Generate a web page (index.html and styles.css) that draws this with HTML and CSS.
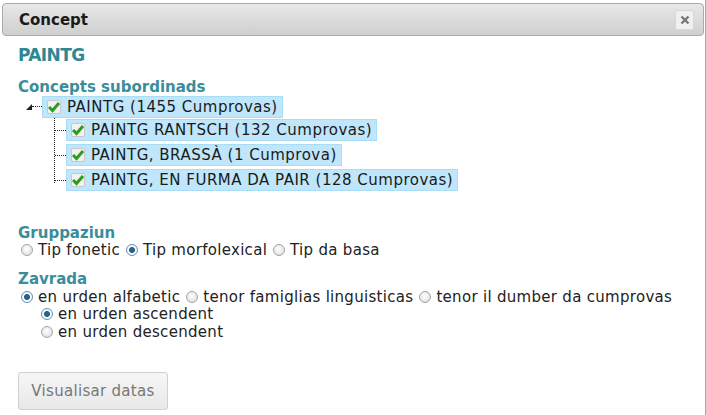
FILE: index.html
```html
<!DOCTYPE html>
<html lang="rm">
<head>
    <meta charset="UTF-8">
    <title>Concept</title>
    <link rel="stylesheet" href="styles.css">
</head>
<body>
    <div class="dialog">
        <div class="titlebar">
            <span class="title">Concept</span>
            <button class="close" title="Serrar">
                <svg width="10" height="10" viewBox="0 0 10 10"><path d="M1.5 1.5 L8.5 8.5 M8.5 1.5 L1.5 8.5" stroke="#777" stroke-width="2.4"/></svg>
            </button>
        </div>
        <div class="content">
            <h2 class="concept-name">PAINTG</h2>

            <h3 class="section-title">Concepts subordinads</h3>
            <div class="tree">
                <div class="tree-root">
                    <span class="toggle">
                        <svg width="8" height="8" viewBox="0 0 8 8"><path d="M7 1 L7 7 L1 7 Z" fill="#222"/></svg>
                    </span>
                    <span class="branch-h"></span>
                    <span class="node"><span class="check"></span>PAINTG (1455 Cumprovas)</span>
                </div>
                <div class="tree-children">
                    <div class="tree-item"><span class="branch-h"></span><span class="node"><span class="check"></span>PAINTG RANTSCH (132 Cumprovas)</span></div>
                    <div class="tree-item"><span class="branch-h"></span><span class="node"><span class="check"></span>PAINTG, BRASSÀ (1 Cumprova)</span></div>
                    <div class="tree-item last"><span class="branch-h"></span><span class="node"><span class="check"></span>PAINTG, EN FURMA DA PAIR (128 Cumprovas)</span></div>
                </div>
            </div>

            <h3 class="section-title spaced">Gruppaziun</h3>
            <div class="options">
                <label class="option"><span class="radio"></span>Tip fonetic</label>
                <label class="option"><span class="radio on"></span>Tip morfolexical</label>
                <label class="option"><span class="radio"></span>Tip da basa</label>
            </div>

            <h3 class="section-title">Zavrada</h3>
            <div class="options">
                <label class="option"><span class="radio on"></span>en urden alfabetic</label>
                <label class="option"><span class="radio"></span>tenor famiglias linguisticas</label>
                <label class="option"><span class="radio"></span>tenor il dumber da cumprovas</label>
            </div>
            <div class="suboptions">
                <label class="option"><span class="radio on"></span>en urden ascendent</label>
                <label class="option"><span class="radio"></span>en urden descendent</label>
            </div>

            <button class="show-btn">Visualisar datas</button>
        </div>
    </div>
</body>
</html>
```

FILE: styles.css
```css
* {
    margin: 0;
    padding: 0;
    box-sizing: border-box;
}

body, html {
    height: 100%;
    background: #fff;
    font-family: "DejaVu Sans", Verdana, sans-serif;
    overflow: hidden;
}

.dialog {
    width: 706px;
    height: 415px;
    border-right: 1px solid #a8a8a8;
    padding: 3px 1px 0 2px;
    color: #222;
}

/* Title bar */
.titlebar {
    display: flex;
    align-items: center;
    justify-content: space-between;
    height: 33px;
    padding: 0 9px 0 16px;
    border: 1px solid #aaa;
    border-radius: 4px;
    background: linear-gradient(#e8e8e8, #cfcfcf);
}

.title {
    font-size: 15px;
    font-weight: bold;
    color: #1a1a1a;
}

.close {
    display: flex;
    align-items: center;
    justify-content: center;
    width: 19px;
    height: 20px;
    border: 1px solid #d8d8d8;
    border-radius: 2px;
    background: #f0f0f0;
}

.content {
    padding: 6px 0 0 16px;
}

.concept-name {
    font-size: 17px;
    font-weight: bold;
    color: #2e8795;
    line-height: 26px;
    letter-spacing: -0.6px;
    margin-bottom: 11px;
}

.section-title {
    font-size: 15px;
    font-weight: bold;
    color: #3a8d9a;
    line-height: 16px;
}

.section-title.spaced {
    margin-top: 42px;
}

/* Tree */
.tree {
    font-size: 15px;
    letter-spacing: 0.5px;
    color: #1a1a1a;
}

.tree-root {
    display: flex;
    align-items: center;
    height: 23px;
    padding-left: 7px;
}

.toggle {
    display: flex;
    align-items: flex-end;
    width: 8px;
    height: 12px;
    margin-bottom: 4px;
}

.branch-h {
    width: 11px;
    border-top: 1px dotted #222;
}

.tree-root .branch-h {
    width: 10px;
    margin-left: -1px;
}

.node {
    display: flex;
    align-items: center;
    height: 22px;
    padding: 0 4px 0 4px;
    background: #bfe6fb;
    border: 1px solid #a9dcf7;
    white-space: nowrap;
}

.check {
    width: 14px;
    height: 14px;
    margin-right: 6px;
    border: 1px solid #c8c8c8;
    border-radius: 2px;
    background: #f2f2f2 url("data:image/svg+xml,%3Csvg xmlns='http://www.w3.org/2000/svg' width='14' height='14' viewBox='0 0 14 14'%3E%3Cpath d='M2 7 L5.5 10.5 L12 3' fill='none' stroke='%232a9d1e' stroke-width='3'/%3E%3C/svg%3E") no-repeat center;
}

.tree-children {
    margin-left: 36px;
    border-left: 1px dotted #222;
    height: 65px;
    display: flex;
    flex-direction: column;
    gap: 2px;
}

.tree-item {
    display: flex;
    align-items: center;
    height: 22px;
    margin-top: 1px;
}

/* Radios */
.options {
    display: flex;
    gap: 6px;
    font-size: 15px;
    letter-spacing: 0.3px;
    line-height: 18px;
    margin: 1px 0 14px 3px;
}

.section-title.spaced + .options {
    margin-top: 0;
    margin-bottom: 12px;
}

.option {
    display: flex;
    align-items: center;
    white-space: nowrap;
}

.radio {
    width: 12px;
    height: 12px;
    margin-right: 5px;
    border-radius: 50%;
    border: 1px solid #a4a4a4;
    background: radial-gradient(circle at 45% 40%, #fff, #d8d8d8);
}

.radio.on {
    background: radial-gradient(circle, #1d6ea0 0, #1a5f8a 2.5px, #fff 3.5px, #e4e4e4 100%);
    border-color: #6b8eb0;
}

.options + .suboptions {
    margin-top: -15px;
}

.suboptions {
    display: flex;
    flex-direction: column;
    font-size: 15px;
    letter-spacing: 0.3px;
    line-height: 18px;
    margin-left: 23px;
}

.show-btn {
    margin-top: 31px;
    width: 150px;
    height: 38px;
    font-family: inherit;
    font-size: 15px;
    letter-spacing: 0.3px;
    color: #777;
    border: 1px solid #d0d0d0;
    border-radius: 3px;
    background: linear-gradient(#f6f6f6, #e8e8e8);
}
```
